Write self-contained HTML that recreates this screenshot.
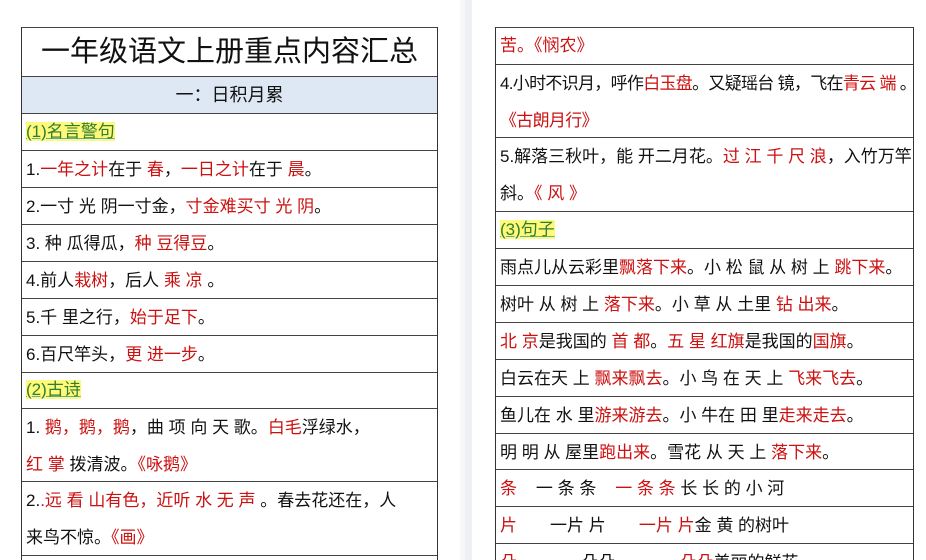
<!DOCTYPE html>
<html><head><meta charset="utf-8"><style>
html,body{margin:0;width:926px;height:560px;overflow:hidden;background:#fff;font-family:"Liberation Sans","Noto Sans CJK SC",sans-serif;position:relative}
.sep{position:absolute;left:460px;top:0;width:12px;height:560px;background:#eef0f4}
.sep2{position:absolute;left:460px;top:0;width:5px;height:560px;background:#f6f7f9}
.t{position:absolute;border-left:1px solid #333;border-right:1px solid #333;overflow:hidden}
.r{position:absolute;left:0;right:0;border-top:1px solid #444;box-sizing:border-box;padding-left:4px;font-size:17px;color:#111;white-space:nowrap;overflow:hidden}
.red{color:#cc1111}
.h{background:#fff97a;color:#2e7d32;text-decoration:underline;text-decoration-color:#6a9}
</style></head><body>
<div class="sep"></div><div class="sep2"></div>

<div class="t" style="left:21px;top:27px;width:415px;height:533px">
<div class="r" style="top:0;height:49px;text-align:center;font-size:29px;line-height:48px;padding:0">一年级语文上册重点内容汇总</div>
<div class="r" style="top:49px;height:37px;background:#dde8f4;text-align:center;font-size:18px;line-height:36px;padding:0">一：日积月累</div>
<div class="r" style="top:86px;height:37px;line-height:36px"><span class="h">(1)名言警句</span></div>
<div class="r" style="top:123px;height:37px;line-height:38px">1.<span class="red">一年之计</span>在于 <span class="red">春</span>，<span class="red">一日之计</span>在于 <span class="red">晨</span>。</div>
<div class="r" style="top:160px;height:37px;line-height:38px">2.一寸 光 阴一寸金，<span class="red">寸金难买寸 光 阴</span>。</div>
<div class="r" style="top:197px;height:37px;line-height:38px">3. 种 瓜得瓜，<span class="red">种 豆得豆</span>。</div>
<div class="r" style="top:234px;height:37px;line-height:38px">4.前人<span class="red">栽树</span>，后人 <span class="red">乘 凉</span> 。</div>
<div class="r" style="top:271px;height:37px;line-height:38px">5.千 里之行，<span class="red">始于足下</span>。</div>
<div class="r" style="top:308px;height:37px;line-height:38px">6.百尺竿头，<span class="red">更 进一步</span>。</div>
<div class="r" style="top:345px;height:36px;line-height:34px"><span class="h">(2)古诗</span></div>
<div class="r" style="top:381px;height:73px;line-height:37px">1. <span class="red">鹅，鹅，鹅</span>，曲 项 向 天 歌。<span class="red">白毛</span>浮绿水，<br><span class="red">红 掌</span> 拨清波。<span class="red">《咏鹅》</span></div>
<div class="r" style="top:454px;height:74px;line-height:37px">2.<span class="red">.远 看 山有色，近听 水 无 声</span> 。春去花还在，人<br>来鸟不惊。<span class="red">《画》</span></div>
<div class="r" style="top:528px;height:5px"></div>
</div>

<div class="t" style="left:495px;top:27px;width:417px;height:533px">
<div class="r" style="top:0;height:37px;line-height:36px"><span class="red">苦。《悯农》</span></div>
<div class="r" style="top:37px;height:73px;line-height:37px;letter-spacing:-0.7px">4.小时不识月，呼作<span class="red">白玉盘</span>。又疑瑶台 镜，飞在<span class="red">青云 端</span> 。<br><span class="red">《古朗月行》</span></div>
<div class="r" style="top:110px;height:74px;line-height:37px">5.解落三秋叶，能 开二月花。<span class="red">过 江 千 尺 浪</span>，入竹万竿<br>斜。<span class="red">《 风 》</span></div>
<div class="r" style="top:184px;height:37px;line-height:36px"><span class="h">(3)句子</span></div>
<div class="r" style="top:221px;height:37px;line-height:38px">雨点儿从云彩里<span class="red">飘落下来</span>。小 松 鼠 从 树 上 <span class="red">跳下来</span>。</div>
<div class="r" style="top:258px;height:37px;line-height:38px">树叶 从 树 上 <span class="red">落下来</span>。小 草 从 土里 <span class="red">钻 出来</span>。</div>
<div class="r" style="top:295px;height:37px;line-height:38px"><span class="red">北 京</span>是我国的 <span class="red">首 都</span>。<span class="red">五 星 红旗</span>是我国的<span class="red">国旗</span>。</div>
<div class="r" style="top:332px;height:37px;line-height:38px">白云在天 上 <span class="red">飘来飘去</span>。小 鸟 在 天 上 <span class="red">飞来飞去</span>。</div>
<div class="r" style="top:369px;height:37px;line-height:38px">鱼儿在 水 里<span class="red">游来游去</span>。小 牛在 田 里<span class="red">走来走去</span>。</div>
<div class="r" style="top:406px;height:36px;line-height:38px">明 明 从 屋里<span class="red">跑出来</span>。雪花 从 天 上 <span class="red">落下来</span>。</div>
<div class="r" style="top:442px;height:37px;line-height:38px"><span class="red">条</span>&nbsp;&nbsp;&nbsp;&nbsp;一 条 条&nbsp;&nbsp;&nbsp;&nbsp;<span class="red">一 条 条</span> 长 长 的 小 河</div>
<div class="r" style="top:479px;height:37px;line-height:38px"><span class="red">片</span>&nbsp;&nbsp;&nbsp;&nbsp;&nbsp;&nbsp;&nbsp;一片 片&nbsp;&nbsp;&nbsp;&nbsp;&nbsp;&nbsp;&nbsp;<span class="red">一片 片</span>金 黄 的树叶</div>
<div class="r" style="top:516px;height:17px;line-height:38px"><span class="red">朵</span>&nbsp;&nbsp;&nbsp;&nbsp;&nbsp;&nbsp;&nbsp;&nbsp;&nbsp;&nbsp;一朵朵&nbsp;&nbsp;&nbsp;&nbsp;&nbsp;&nbsp;&nbsp;&nbsp;&nbsp;&nbsp;<span class="red">一朵朵</span>美丽的鲜花</div>
</div>
</body></html>
